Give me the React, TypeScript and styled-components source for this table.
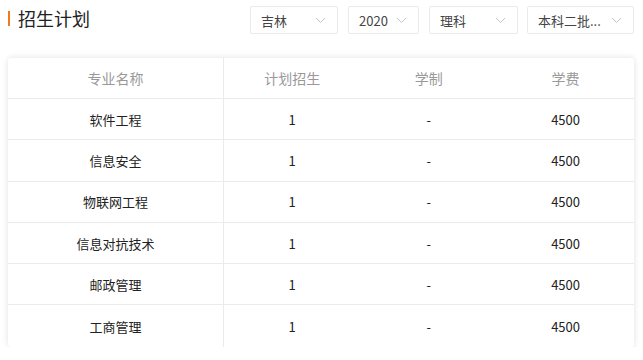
import React from "react";
import styled, { createGlobalStyle } from "styled-components";

const GlobalStyle = createGlobalStyle`
  html, body {
    margin: 0;
    padding: 0;
    background: #fff;
  }
  body {
    font-family: "Microsoft YaHei", "Noto Sans CJK SC", "Noto Sans", sans-serif;
    color: #333;
  }
`;

interface Row {
  name: string;
  plan: string;
  years: string;
  fee: string;
}

const rows: Row[] = [
  { name: "软件工程", plan: "1", years: "-", fee: "4500" },
  { name: "信息安全", plan: "1", years: "-", fee: "4500" },
  { name: "物联网工程", plan: "1", years: "-", fee: "4500" },
  { name: "信息对抗技术", plan: "1", years: "-", fee: "4500" },
  { name: "邮政管理", plan: "1", years: "-", fee: "4500" },
  { name: "工商管理", plan: "1", years: "-", fee: "4500" },
];

const filters = [
  { label: "吉林", width: 88 },
  { label: "2020", width: 71 },
  { label: "理科", width: 89 },
  { label: "本科二批...", width: 107 },
];

const Chevron: React.FC = () => (
  <svg width="11" height="7" viewBox="0 0 11 7">
    <path d="M1 1 L5.5 5.5 L10 1" fill="none" stroke="#c0c4cc" strokeWidth="1" />
  </svg>
);

const App: React.FC = () => {
  return (
    <Page>
      <GlobalStyle />
      <Header>
        <Title>招生计划</Title>
        <Filters>
          {filters.map((f) => (
            <Select key={f.label} width={f.width}>
              <span>{f.label}</span>
              <Chevron />
            </Select>
          ))}
        </Filters>
      </Header>
      <Card>
        <Table>
          <thead>
            <tr>
              <Th first>专业名称</Th>
              <Th>计划招生</Th>
              <Th>学制</Th>
              <Th>学费</Th>
            </tr>
          </thead>
          <tbody>
            {rows.map((r) => (
              <tr key={r.name}>
                <Td first>{r.name}</Td>
                <Td>{r.plan}</Td>
                <Td>{r.years}</Td>
                <Td>{r.fee}</Td>
              </tr>
            ))}
          </tbody>
        </Table>
      </Card>
    </Page>
  );
};

export default App;

const Page = styled.div`
  width: 643px;
  padding: 6px 9px 0 8px;
  box-sizing: border-box;
`;

const Header = styled.div`
  display: flex;
  justify-content: space-between;
  align-items: center;
  height: 28px;
`;

const Title = styled.h2`
  margin: 0;
  padding-left: 8px;
  border-left: 2px solid #f07a1d;
  font-size: 18px;
  font-weight: normal;
  line-height: 15px;
  color: #222;
  position: relative;
  top: -2px;
`;

const Filters = styled.div`
  display: flex;
  gap: 10px;

  & > :last-child {
    margin-left: -1px;
  }
`;

const Select = styled.div<{ width: number }>`
  width: ${({ width }) => width}px;
  height: 28px;
  box-sizing: border-box;
  border: 1px solid #ebebeb;
  border-radius: 2px;
  display: flex;
  align-items: center;
  justify-content: space-between;
  padding: 0 11px 0 10px;
  font-size: 13px;
  color: #444;
`;

const Card = styled.div`
  margin-top: 24px;
  background: #fff;
  border-radius: 3px;
  box-shadow: 0 0 6px rgba(0, 0, 0, 0.12);
  overflow: hidden;
`;

const Table = styled.table`
  width: 100%;
  border-collapse: collapse;
  table-layout: fixed;
`;

const Th = styled.th<{ first?: boolean }>`
  height: 40px;
  padding: 0;
  font-size: 14px;
  font-weight: normal;
  color: #999;
  text-align: center;
  border-bottom: 1px solid #ebebeb;
  border-right: ${({ first }) => (first ? "1px solid #ebebeb" : "none")};
  width: ${({ first }) => (first ? "215px" : "auto")};
`;

const Td = styled.td<{ first?: boolean }>`
  height: 40.3px;
  padding: 0;
  font-size: 13px;
  color: #222;
  text-align: center;
  border-bottom: 1px solid #ebebeb;
  border-right: ${({ first }) => (first ? "1px solid #ebebeb" : "none")};
  tr:last-child > & {
    border-bottom: none;
    height: 41.3px;
  }
`;
